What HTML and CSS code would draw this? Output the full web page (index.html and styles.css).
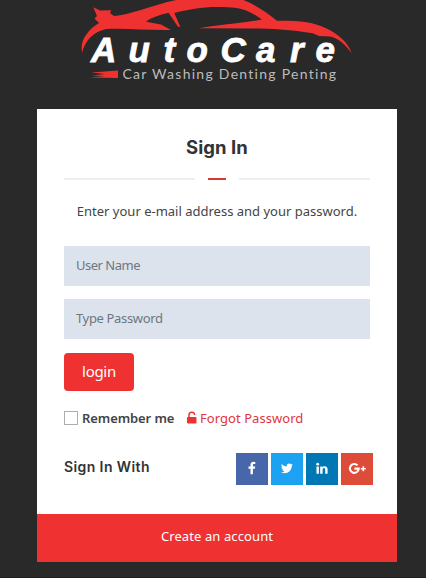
FILE: index.html
```html
<!DOCTYPE html>
<html lang="en">
<head>
<meta charset="utf-8">
<title>AutoCare - Sign In</title>
<link rel="stylesheet" href="styles.css">
</head>
<body>
<main class="page">
  <svg class="logo" width="272" height="88" viewBox="81 0 272 88" role="img" aria-label="AutoCare">
    <path class="red" fill-rule="evenodd" d="M82 52.7C81 46 82 40 86 35C89 30 94 26 99 23L94.5 18.5L97 16L93.3 7.3L100 10.5L111.3 10.3L110 13L114 16C130 15 149 6 176 0V-3H233C249 0 265 11 277 20.7C299 20.5 314 22 326 28.3C340 35 348 43 351.7 53.3C345 44 338 38 330 36.5L319 36L312.7 33.3C293 30 280 29.3 260 28.5L199 28.3C215 25 238 24 262 19.5C245 7 234 7 216 7C203 7 186 9.7 174.3 13L180.3 26.7H178L168.5 12.7C159 15 150 18 146 21.7L161 24.5L171 30C148 30.5 127 28 106 29C93 32 85 41 82 52.7Z"/>
    <path class="red" d="M91 72.5L118 70.5V78L90 77.5L105 76L92 75.5L105 74Z"/>
    <text class="brand" x="91 128.5 163.5 186.5 220.5 256 290 315.5" y="62.3">AutoCare</text>
    <text class="tagline" x="122.5" y="78.5" textLength="213.5">Car Washing Denting Penting</text>
  </svg>

  <section class="card">
    <div class="content">
      <h1 class="title">Sign In</h1>
      <div class="divider"><span class="line"></span><span class="dash"></span><span class="line"></span></div>
      <p class="intro">Enter your e-mail address and your password.</p>
      <form class="form">
        <input class="field user" type="text" placeholder="User Name" aria-label="User Name">
        <input class="field pass" type="password" placeholder="Type Password" aria-label="Password">
        <button class="login" type="button">login</button>
        <div class="options">
          <label class="remember"><input class="check" type="checkbox"><span>Remember me</span></label>
          <a class="forgot"><svg class="lock" width="10" height="13" viewBox="0 0 10 13"><path class="shackle" d="M2 7V4a2.8 2.8 0 0 1 5.6 0"/><rect class="red" y="6" width="9.5" height="6.5" rx="1"/></svg><span>Forgot Password</span></a>
        </div>
      </form>
      <div class="social">
        <h2 class="with">Sign In With</h2>
        <div class="links">
          <a class="tile facebook" aria-label="Facebook"><svg width="32" height="32" viewBox="0 0 32 32"><path d="M19.3 9v2h-1.2c-1 0-1.2.5-1.2 1.1v1.5h2.3l-.3 2.2h-2v5.4h-2.4v-5.4h-2v-2.2h2v-1.7c0-2 1.2-3.1 3-3.1z"/></svg></a>
          <a class="tile twitter" aria-label="Twitter"><svg width="32" height="32" viewBox="0 0 32 32"><path d="M22 11.4c-.3.5-.7.9-1.2 1.2 0 4.2-2.7 7.7-6.9 7.7-1.4 0-2.7-.4-3.8-1.1 1.3.1 2.5-.2 3.5-1-1.1 0-2-.8-2.3-1.7h1.1c-1.2-.3-2-1.3-2-2.5l1.1.3c-1.1-.8-1.4-2.1-.7-3.3 1.2 1.5 3 2.4 5 2.5-.4-1.7.9-3 2.4-3 .7 0 1.3.3 1.8.8l1.5-.6-1.1 1.3z"/></svg></a>
          <a class="tile linkedin" aria-label="LinkedIn"><svg width="32" height="32" viewBox="0 0 32 32"><circle cx="11.7" cy="11.2" r="1.4"/><path d="M10.5 13.4h2.4v7.4h-2.4zM14.2 13.4h2.3v1c.4-.7 1.2-1.2 2.3-1.2 2 0 2.8 1.3 2.8 3.4v4.2h-2.4v-3.9c0-1.1-.3-1.8-1.2-1.8-1 0-1.4.7-1.4 1.8v3.9h-2.4z"/></svg></a>
          <a class="tile google" aria-label="Google Plus"><svg width="32" height="32" viewBox="0 0 32 32"><path class="g" d="M16.5 12.4a4.4 4.4 0 1 0 1.2 3.2h-4.3"/><path d="M21.5 13.2h1.6v1.7h1.7v1.6h-1.7v1.7h-1.6v-1.7h-1.7v-1.6h1.7z"/></svg></a>
        </div>
      </div>
    </div>
    <a class="create"><span>Create an account</span></a>
  </section>
</main>
</body>
</html>
```

FILE: styles.css
```css
* { box-sizing: border-box; }
body {
  margin: 0;
  background: #292929;
  color: #444;
  font: 13px/20px "Noto Sans", sans-serif;
  overflow: hidden;
}
.page { height: 578px; border-bottom: 1px solid #221f20; }
.logo { display: block; margin: 0 0 21px 81px; }
.red { fill: #ef3131; }
.brand { fill: #fff; stroke: #fff; stroke-width: .8; font: italic 700 35px "Liberation Sans", sans-serif; }
.tagline { fill: #bcbcbc; font: 14px Lato, sans-serif; font-variant-ligatures: none; }
.card { width: 360px; height: 453px; margin-left: 37px; background: #fff; display: flex; flex-direction: column; }
.content { height: 405px; padding: 24px 27px 0; }
.title { margin: 0; color: #333; font: 700 18.5px/28px Inter, sans-serif; letter-spacing: .05px; text-align: center; }
.divider { display: flex; align-items: center; gap: 13px; height: 2px; margin-top: 17px; }
.line { flex: 1; height: 2px; background: #eee; }
.dash { width: 18px; height: 2px; background: #d93636; }
.intro { margin: 21px 0 0; text-align: center; white-space: nowrap; }
.form { margin-top: 25px; }
.field {
  display: block;
  width: 100%;
  height: 40px;
  margin: 0 0 13px;
  padding: 0 12px 2px;
  border: 0;
  border-radius: 0;
  background: #dce3ec;
  font: 13px/20px "Noto Sans", sans-serif;
  letter-spacing: -.5px;
}
.field::placeholder { color: #6f7680; opacity: 1; }
.pass { margin-bottom: 14px; letter-spacing: -.35px; }
.login {
  display: block;
  width: 70px;
  height: 38px;
  padding: 0 0 2px;
  border: 0;
  border-radius: 4px;
  background: #ef3131;
  color: #fff;
  font: 15px/22px "Noto Sans", sans-serif;
  letter-spacing: -.3px;
}
.options { display: flex; align-items: center; height: 20px; margin-top: 17px; }
.remember { display: flex; align-items: center; width: 123px; gap: 4px; font-weight: 600; white-space: nowrap; letter-spacing: -.1px; }
.check { appearance: none; flex: none; width: 14px; height: 14px; margin: 0; border: 1px solid #adadad; background: #fff; }
.forgot { display: flex; align-items: center; gap: 3px; color: #e23440; white-space: nowrap; letter-spacing: .05px; }
.lock { margin-top: -2px; }
.shackle { fill: none; stroke: #ef3131; stroke-width: 1.5; }
.social { display: flex; align-items: center; height: 32px; margin: 25px -3px 0 0; justify-content: space-between; }
.with { margin: 0 0 4px; color: #333; font: 600 14px/20px Inter, sans-serif; letter-spacing: .4px; }
.links { display: flex; gap: 3px; }
.tile { width: 32px; height: 32px; fill: #fff; }
.tile svg { display: block; }
.facebook { background: #4867aa; }
.twitter { background: #1da1f2; }
.linkedin { background: #0077b5; }
.google { background: #dd4b39; }
.g { fill: none; stroke: #fff; stroke-width: 2.1; }
.create { display: flex; align-items: center; justify-content: center; height: 48px; padding-bottom: 4px; background: #ef3131; color: #fff; letter-spacing: .1px; }
```
